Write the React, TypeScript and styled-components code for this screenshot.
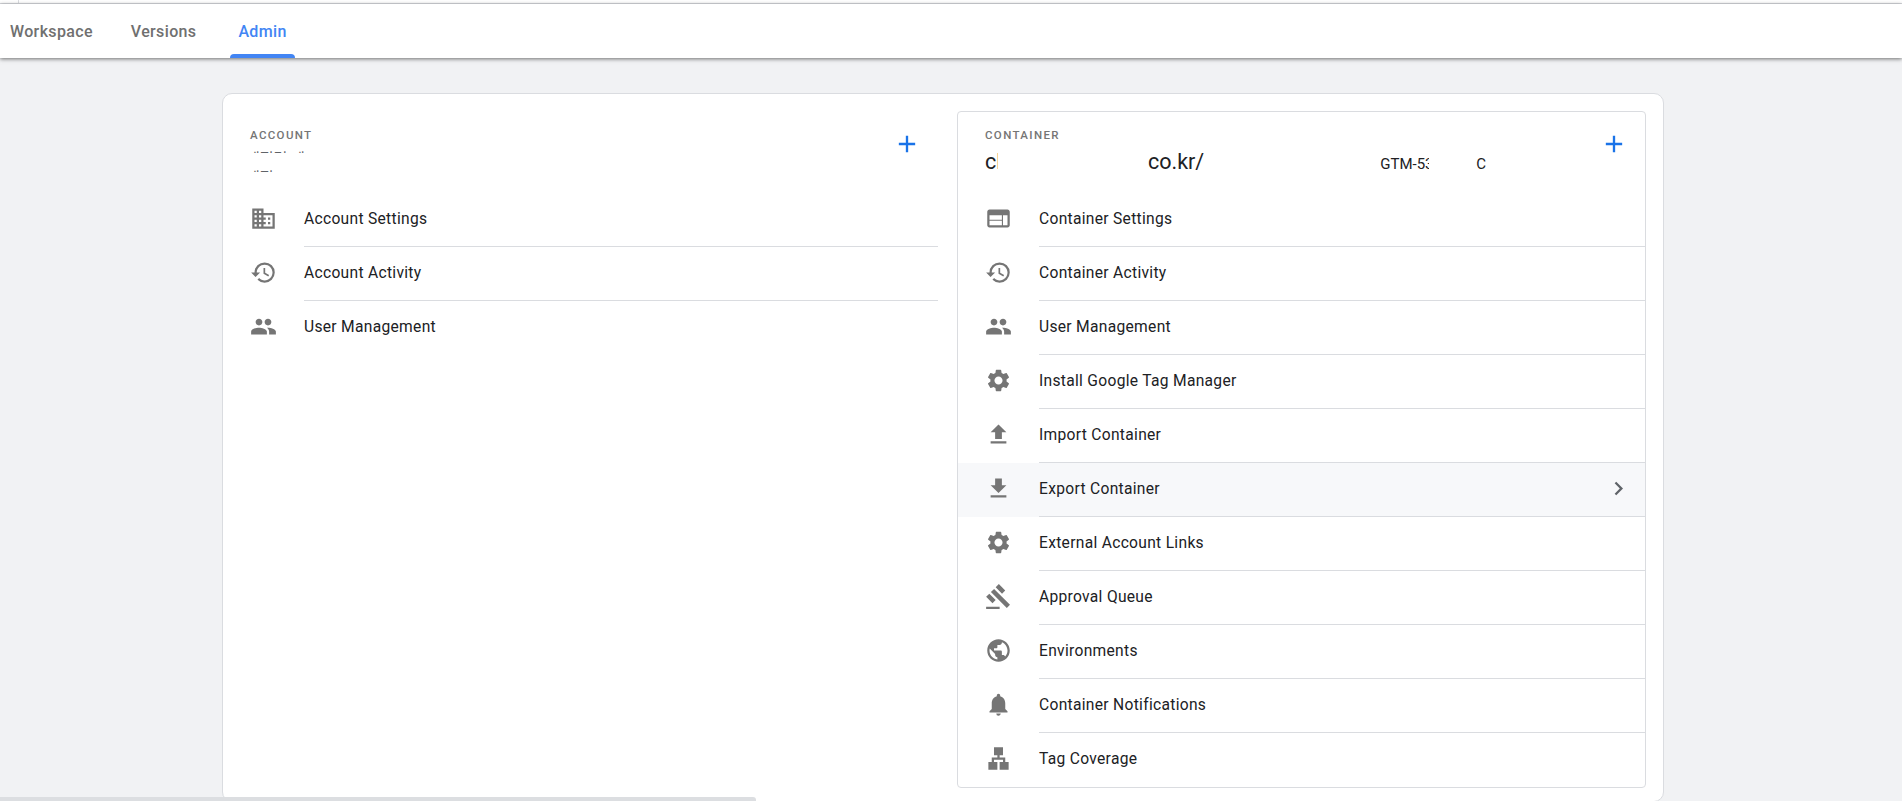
import React from "react";
import styled, { createGlobalStyle } from "styled-components";
import {
  MdDomain, MdHistory, MdPeople, MdWeb, MdSettings, MdFileUpload, MdFileDownload,
  MdGavel, MdPublic, MdNotifications, MdLan, MdAdd, MdChevronRight,
} from "react-icons/md";

const Global = createGlobalStyle`
  html, body { margin: 0; padding: 0; height: 100%; overflow: hidden; background: #f1f2f4; }
  body { font-family: Roboto, "Noto Sans CJK KR", Arial, sans-serif; }
  #root { height: 100%; }
`;

const Page = styled.div`
  position: relative;
  height: 801px;
  overflow: hidden;
  display: flex;
  flex-direction: column;
  background: #f1f2f4;
`;

const TopStrip = styled.div`
  height: 3px;
  flex: none;
  background: #fff;
  border-bottom: 1px solid #dadce0;
  display: flex;
  padding-left: 18px;
  &::before { content: ""; width: 1px; background: #dadce0; }
`;

const TabBar = styled.nav`
  height: 54px;
  flex: none;
  display: flex;
  background: #fff;
  padding-left: 1px;
  box-shadow: 0 1px 4px rgba(0, 0, 0, 0.55);
  position: relative;
  z-index: 1;
`;

const Tab = styled.div<{ $active?: boolean; $gap: number; $pad: number }>`
  position: relative;
  margin-left: ${(p) => p.$gap}px;
  padding: 0 ${(p) => p.$pad}px;
  display: flex;
  align-items: center;
  font-size: 16px;
  letter-spacing: 0.35px;
  font-weight: 500;
  color: ${(p) => (p.$active ? "#4285f4" : "#707070")};
  ${(p) =>
    p.$active &&
    `&::after {
      content: "";
      position: absolute;
      left: 0; right: 0; bottom: 0;
      height: 4px;
      background: #4285f4;
      border-radius: 4px 4px 0 0;
    }`}
`;

const Card = styled.main`
  margin: 35px 0 0 222px;
  width: 1442px;
  height: 709px;
  flex: none;
  box-sizing: border-box;
  background: #fff;
  border: 1px solid #dadce0;
  border-radius: 10px;
  padding: 17px 0 0 0;
  display: grid;
  grid-template-columns: 734px 689px;
`;

const Column = styled.section<{ $boxed?: boolean }>`
  height: 677px;
  box-sizing: border-box;
  display: flex;
  flex-direction: column;
  ${(p) =>
    p.$boxed
      ? `border: 1px solid #dadce0; border-radius: 4px;`
      : `border: 1px solid transparent; border-left: 0;`}
`;

const Header = styled.header`
  position: relative;
  height: 81px;
  flex: none;
  box-sizing: border-box;
  padding: 16px 0 0 27px;
`;

const Label = styled.div`
  font-size: 11.5px;
  line-height: 14px;
  font-weight: 500;
  letter-spacing: 1.35px;
  color: #757575;
`;

const NameRow = styled.div`
  display: flex;
  align-items: center;
  height: 30px;
  margin-top: 5px;
  color: #202124;
`;

const NameText = styled.span<{ $gap?: number; $clip?: number }>`
  margin-left: ${(p) => p.$gap ?? 0}px;
  font-size: 21.5px;
  line-height: 30px;
  white-space: nowrap;
  ${(p) => (p.$clip ? `width: ${p.$clip}px; overflow: hidden;` : "")}
`;

const IdText = styled.span<{ $gap?: number; $clip?: number }>`
  margin-left: ${(p) => p.$gap ?? 0}px;
  font-size: 15px;
  line-height: 30px;
  padding-top: 3px;
  white-space: nowrap;
  ${(p) => (p.$clip ? `width: ${p.$clip}px; overflow: hidden;` : "")}
`;

const Slit = styled.div<{ $top: number; $width: number; $left: number }>`
  position: absolute;
  left: ${(p) => p.$left}px;
  top: ${(p) => p.$top}px;
  width: ${(p) => p.$width}px;
  height: 2px;
  overflow: hidden;
  font-size: 15px;
  line-height: 17px;
  color: #5f6368;
  white-space: nowrap;
`;

const AddButton = styled.div<{ $right: number }>`
  position: absolute;
  top: 18px;
  right: ${(p) => p.$right}px;
  width: 28px;
  height: 28px;
  color: #1a73e8;
  display: flex;
`;

const List = styled.ul`
  list-style: none;
  margin: 0;
  padding: 0;
  display: flex;
  flex-direction: column;
`;

const Row = styled.li<{ $hover?: boolean; $endGap: number }>`
  height: 54px;
  display: flex;
  align-items: stretch;
  padding-right: ${(p) => p.$endGap}px;
  background: ${(p) => (p.$hover ? "#f7f8fa" : "transparent")};
  color: #202124;
`;

const IconCell = styled.div`
  width: 81px;
  flex: none;
  box-sizing: border-box;
  padding: 0 0 3px 27px;
  display: flex;
  align-items: center;
  color: #757575;
`;

const RowBody = styled.div<{ $last?: boolean }>`
  flex: 1;
  display: flex;
  align-items: center;
  justify-content: space-between;
  padding-bottom: 2px;
  font-size: 15.6px;
  letter-spacing: 0.3px;
  border-bottom: ${(p) => (p.$last ? "0" : "1px solid #dadce0")};
`;

const Chevron = styled.span`
  display: flex;
  color: #5f6368;
  margin-right: 13px;
`;

const ScrollThumb = styled.div`
  position: absolute;
  left: 0;
  bottom: 0;
  width: 756px;
  height: 4px;
  background: #dcdee1;
  border-radius: 0 3px 0 0;
  z-index: 2;
`;

type Item = { icon: React.ComponentType<{ size?: number }>; label: string; hover?: boolean };

const accountItems: Item[] = [
  { icon: MdDomain, label: "Account Settings" },
  { icon: MdHistory, label: "Account Activity" },
  { icon: MdPeople, label: "User Management" },
];

const containerItems: Item[] = [
  { icon: MdWeb, label: "Container Settings" },
  { icon: MdHistory, label: "Container Activity" },
  { icon: MdPeople, label: "User Management" },
  { icon: MdSettings, label: "Install Google Tag Manager" },
  { icon: MdFileUpload, label: "Import Container" },
  { icon: MdFileDownload, label: "Export Container", hover: true },
  { icon: MdSettings, label: "External Account Links" },
  { icon: MdGavel, label: "Approval Queue" },
  { icon: MdPublic, label: "Environments" },
  { icon: MdNotifications, label: "Container Notifications" },
  { icon: MdLan, label: "Tag Coverage" },
];

function Rows({ items, endGap }: { items: Item[]; endGap: number }) {
  return (
    <List>
      {items.map((it, i) => {
        const Icon = it.icon;
        return (
          <Row key={i} $hover={it.hover} $endGap={endGap}>
            <IconCell>
              <Icon size={27} />
            </IconCell>
            <RowBody $last={i === items.length - 1}>
              {it.label}
              {it.hover && (
                <Chevron>
                  <MdChevronRight size={27} />
                </Chevron>
              )}
            </RowBody>
          </Row>
        );
      })}
    </List>
  );
}

export default function App() {
  return (
    <Page>
      <Global />
      <TopStrip />
      <TabBar>
        <Tab $gap={0} $pad={9}>Workspace</Tab>
        <Tab $gap={20} $pad={9}>Versions</Tab>
        <Tab $gap={25} $pad={8} $active>Admin</Tab>
      </TabBar>
      <Card>
        <Column>
          <Header>
            <Label>ACCOUNT</Label>
            <Slit $left={23} $top={39} $width={63}>계정명 테스트</Slit>
            <Slit $left={23} $top={58} $width={40}>계정 이름</Slit>
            <AddButton $right={35}>
              <MdAdd size={28} />
            </AddButton>
          </Header>
          <Rows items={accountItems} endGap={18} />
        </Column>
        <Column $boxed>
          <Header>
            <Label>CONTAINER</Label>
            <NameRow>
              <NameText $clip={13}>cl</NameText>
              <NameText $gap={150}>co.kr/</NameText>
              <IdText $gap={176} $clip={49}>GTM-53</IdText>
              <IdText $gap={47}>C</IdText>
            </NameRow>
            <AddButton $right={17}>
              <MdAdd size={28} />
            </AddButton>
          </Header>
          <Rows items={containerItems} endGap={0} />
        </Column>
      </Card>
      <ScrollThumb />
    </Page>
  );
}
